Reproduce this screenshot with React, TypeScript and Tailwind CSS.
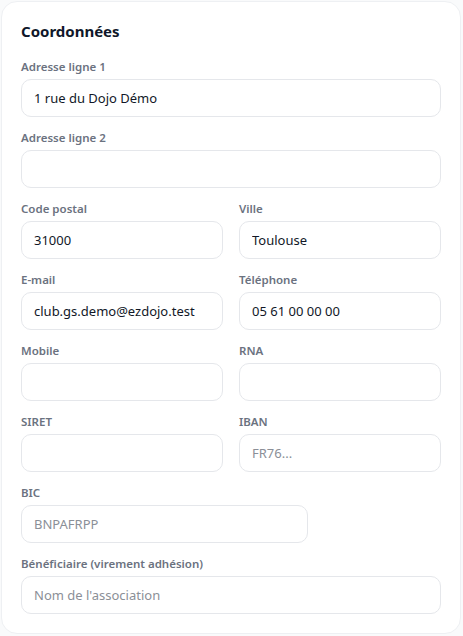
type Field = {
  label: string
  value?: string
  placeholder?: string
  width?: string
}

function TextField({ label, value, placeholder, width }: Field) {
  return (
    <div className={width ?? 'w-full'}>
      <label className="block mb-1 text-[11.5px] leading-4 font-semibold text-[#6b7280]">{label}</label>
      <input
        type="text"
        defaultValue={value}
        placeholder={placeholder}
        className="block w-full h-[38px] px-3 rounded-[10px] border border-[#e5e7eb] bg-white text-[13px] text-[#111827] placeholder:text-[#8b8f97] outline-none"
      />
    </div>
  )
}

export default function App() {
  return (
    <div className="min-h-screen bg-[#f9fafb] p-px" style={{ fontFamily: '"Noto Sans", "Open Sans", sans-serif' }}>
      <section className="w-[460px] bg-white border border-[#eef0f3] rounded-2xl px-[19px] pt-[19px] pb-[19px]">
        <h2 className="text-[15px] leading-5 font-bold text-[#0f172a] mb-[18px]">Coordonnées</h2>

        <div className="flex flex-col gap-[13px]">
          <TextField label="Adresse ligne 1" value="1 rue du Dojo Démo" />
          <TextField label="Adresse ligne 2" />

          <div className="grid grid-cols-2 gap-x-4">
            <TextField label="Code postal" value="31000" />
            <TextField label="Ville" value="Toulouse" />
          </div>
          <div className="grid grid-cols-2 gap-x-4">
            <TextField label="E-mail" value="club.gs.demo@ezdojo.test" />
            <TextField label="Téléphone" value="05 61 00 00 00" />
          </div>
          <div className="grid grid-cols-2 gap-x-4">
            <TextField label="Mobile" />
            <TextField label="RNA" />
          </div>
          <div className="grid grid-cols-2 gap-x-4">
            <TextField label="SIRET" />
            <TextField label="IBAN" placeholder="FR76..." />
          </div>

          <TextField label="BIC" placeholder="BNPAFRPP" width="w-[287px]" />
          <TextField label="Bénéficiaire (virement adhésion)" placeholder="Nom de l'association" />
        </div>
      </section>
    </div>
  )
}
